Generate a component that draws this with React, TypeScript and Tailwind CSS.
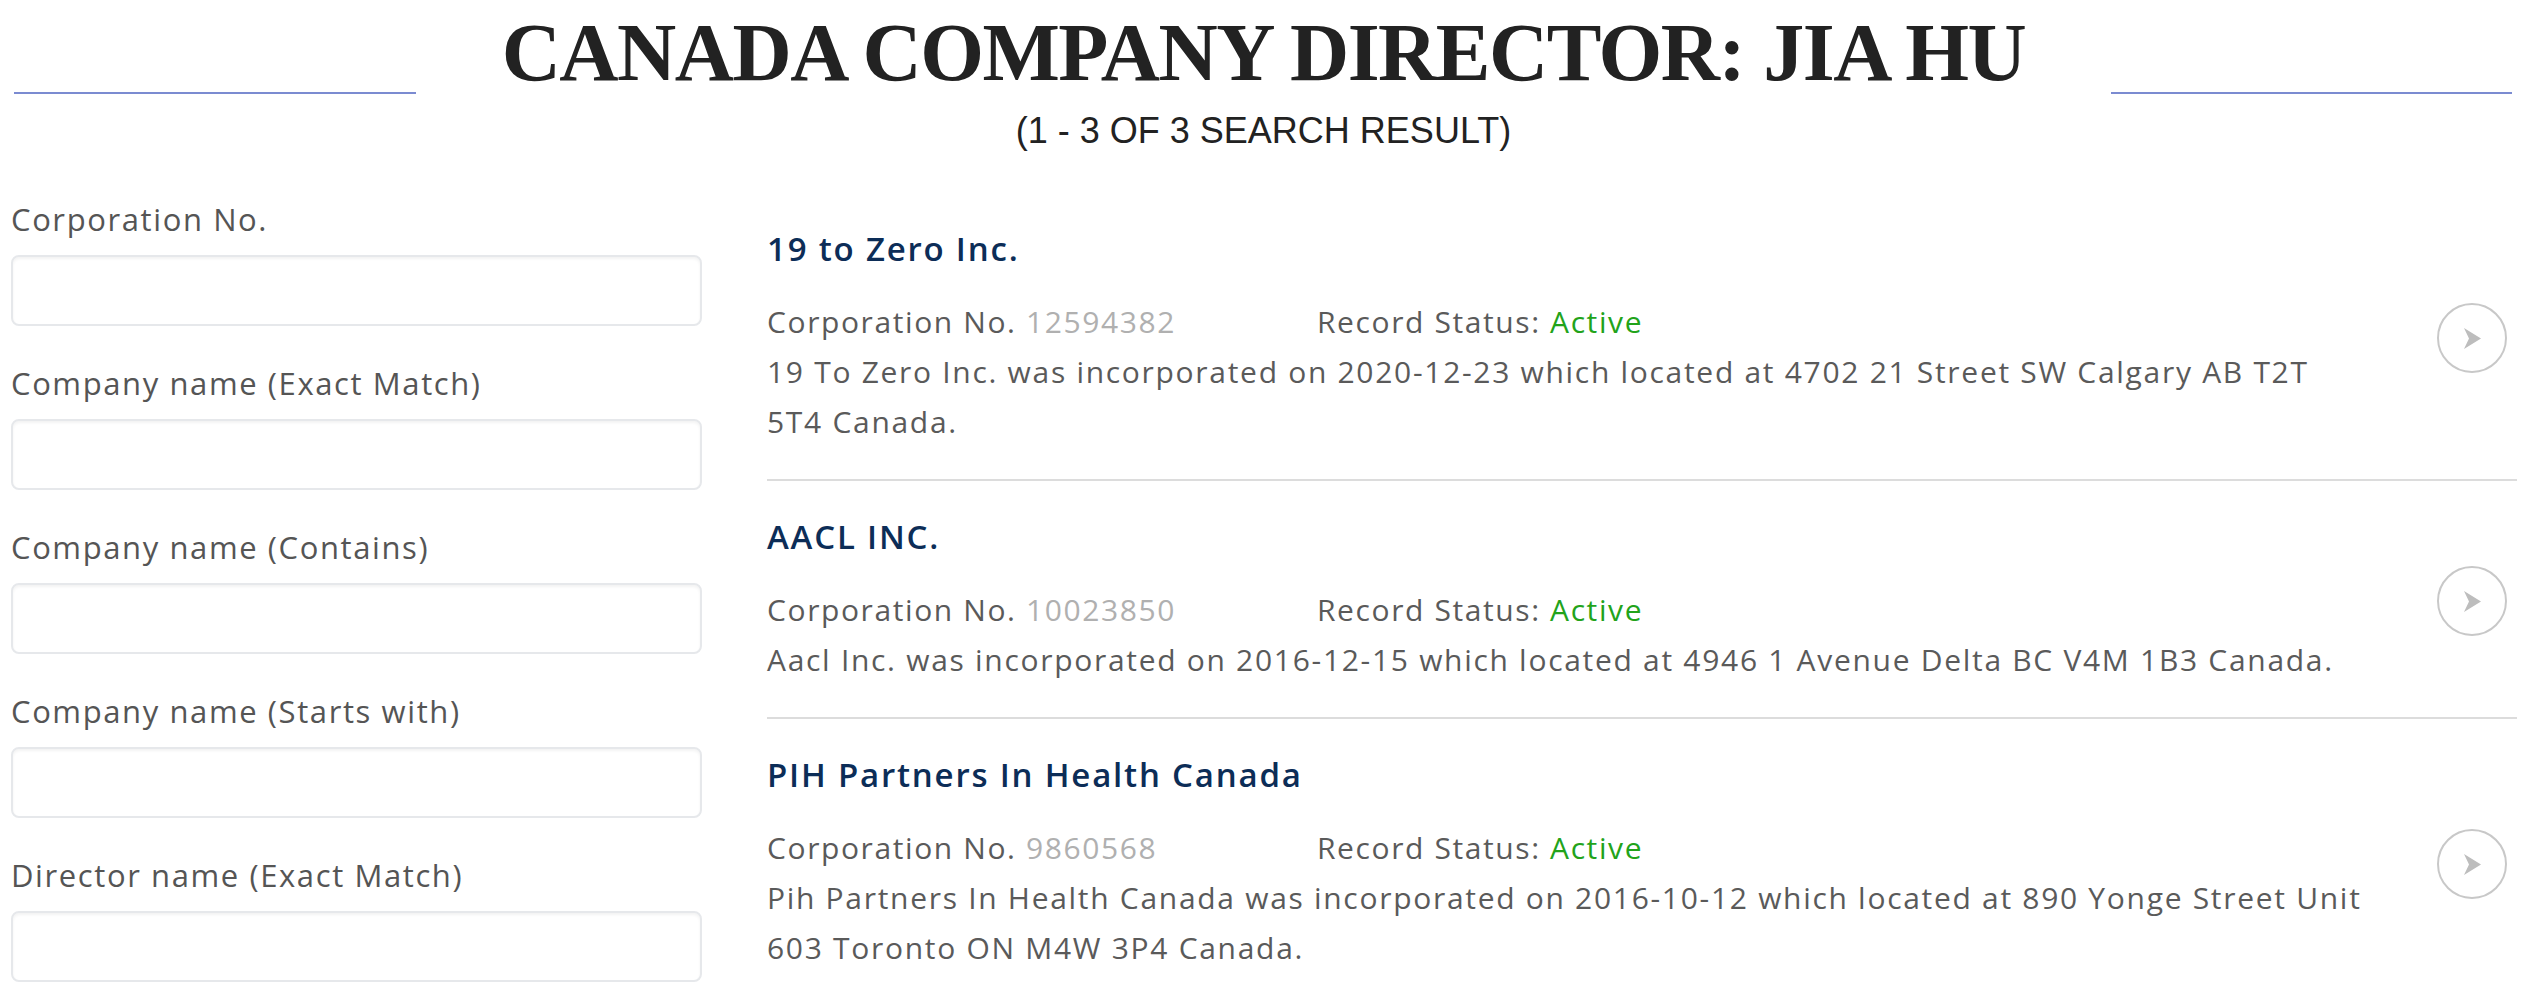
import React from "react";

const fields = [
  "Corporation No.",
  "Company name (Exact Match)",
  "Company name (Contains)",
  "Company name (Starts with)",
  "Director name (Exact Match)",
];

const results = [
  {
    name: "19 to Zero Inc.",
    no: "12594382",
    desc: "19 To Zero Inc. was incorporated on 2020-12-23 which located at 4702 21 Street SW Calgary AB T2T 5T4 Canada.",
  },
  {
    name: "AACL INC.",
    no: "10023850",
    desc: "Aacl Inc. was incorporated on 2016-12-15 which located at 4946 1 Avenue Delta BC V4M 1B3 Canada.",
  },
  {
    name: "PIH Partners In Health Canada",
    no: "9860568",
    desc: "Pih Partners In Health Canada was incorporated on 2016-10-12 which located at 890 Yonge Street Unit 603 Toronto ON M4W 3P4 Canada.",
  },
];

function Arrow() {
  return (
    <svg width="17" height="21" viewBox="0 0 17 21" aria-hidden="true">
      <path d="M0 0 L17 10.5 L0 21 L5 10.5 Z" fill="#bdbdbd" />
    </svg>
  );
}

export default function App() {
  return (
    <div className="w-[2532px] min-h-[986px] bg-white font-['Open_Sans',sans-serif]">
      <header className="flex items-start">
        <div className="ml-[14px] mt-[92px] h-[2px] w-[402px] bg-[#7b8bd1]" />
        <div className="flex flex-1 flex-col items-center pt-[12px]">
          <h1 className="font-['Liberation_Serif',serif] text-[82px] font-bold leading-[82px] tracking-[-1.5px] text-[#222]">
            CANADA COMPANY DIRECTOR: JIA HU
          </h1>
          <p className="mt-[19px] font-['Liberation_Sans',Arial,sans-serif] text-[36px] leading-[36px] text-[#222]">
            (1 - 3 OF 3 SEARCH RESULT)
          </p>
        </div>
        <div className="mr-[20px] mt-[92px] h-[2px] w-[401px] bg-[#7b8bd1]" />
      </header>

      <main className="mt-[44px] flex pl-[11px] pr-[15px]">
        <aside className="w-[691px] shrink-0 pt-[6px]">
          {fields.map((f) => (
            <div key={f} className="mb-[37px]">
              <label className="block text-[31px] leading-[40px] tracking-[1.6px] text-[#555]">{f}</label>
              <input
                type="text"
                className="mt-[16px] block h-[71px] w-full rounded-[8px] border-2 border-[#e6e8eb] bg-white shadow-[inset_0_2px_3px_rgba(0,0,0,0.05)] outline-none"
              />
            </div>
          ))}
        </aside>

        <section className="ml-[65px] flex-1">
          {results.map((r) => (
            <div
              key={r.name}
              className="flex items-center border-b-2 border-[#dcdcdc] pb-[32px] pt-[36px]"
            >
              <div className="w-[1599px]">
                <h2 className="text-[33px] font-semibold leading-[40px] tracking-[1.8px] text-[#0c2d57]">{r.name}</h2>
                <div className="mt-[28px] flex text-[30px] leading-[50px] tracking-[1.6px] text-[#5a5a5a]">
                  <span className="w-[550px]">
                    Corporation No. <span className="text-[#b0b0b0]">{r.no}</span>
                  </span>
                  <span>
                    Record Status: <span className="text-[#22a31a]">Active</span>
                  </span>
                </div>
                <p className="text-[30px] leading-[50px] tracking-[1.7px] text-[#5a5a5a]">{r.desc}</p>
              </div>
              <div className="ml-auto mr-[10px] flex h-[70px] w-[70px] items-center justify-center rounded-full border-2 border-[#c8c8c8]">
                <Arrow />
              </div>
            </div>
          ))}
        </section>
      </main>
    </div>
  );
}
